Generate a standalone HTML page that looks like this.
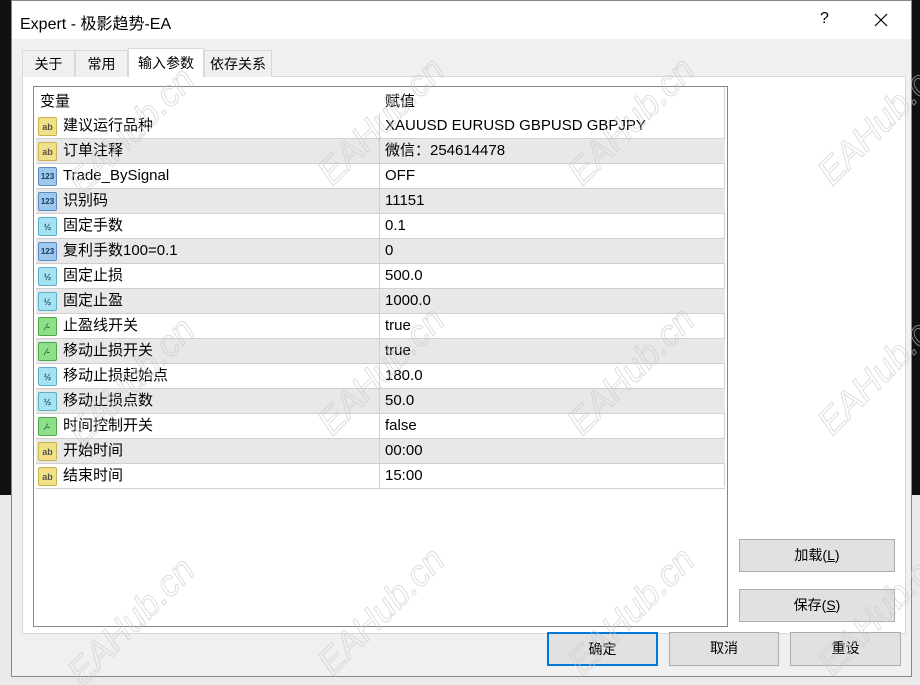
<!DOCTYPE html>
<html><head><meta charset="utf-8"><style>
*{margin:0;padding:0;box-sizing:border-box}
html,body{width:920px;height:685px;overflow:hidden}
body{background:#101010;position:relative;font-family:"Liberation Sans","Noto Sans CJK SC",sans-serif;font-size:15px;color:#000}
.abs{position:absolute}
#dlg{left:11px;top:0;width:901px;height:677px;background:#f0f0f0;border:1px solid #888}
#title{left:0;top:0;width:899px;height:38px;background:#fff}
.tab{top:49px;height:27px;border:1px solid #d9d9d9;border-bottom:none;background:#f0f0f0;font-size:14px;line-height:26px;text-align:center}
#panel{left:10px;top:75px;width:884px;height:558px;border:1px solid #d9d9d9;background:#fff}
#list{left:21px;top:85px;width:695px;height:541px;border:1px solid #828790;background:#fff}
.row{position:absolute;left:2px;width:689px;height:25px;border-bottom:1px solid #d0d0d0}
.row.g{background:#e8e8e8}
.row span{position:absolute;top:0;line-height:24px;height:24px}
.row .n{left:27px}
.row .v{left:349px}
.row .d{position:absolute;left:343px;top:0;width:1px;height:24px;background:#d0d0d0}
.ic{position:absolute;left:2px;top:3px;width:19px;height:19px;border-radius:2px;font-size:9px;font-weight:bold;font-style:normal;text-align:center;line-height:18px}
.ab{background:#efe08a;border:1px solid #c8b44a;color:#554}
.n3{background:#9ec8ee;border:1px solid #5a8cc0;color:#1a3a6a;font-size:8px}
.hf{background:#a6e2f0;border:1px solid #5ab0cc;color:#1a5a7a}
.gr{background:#8ede8a;border:1px solid #4aa848;color:#164}
.btn{background:#e1e1e1;border:1px solid #adadad;text-align:center;font-size:14px;line-height:31px}
.wm{position:absolute;font-size:36px;font-style:italic;color:transparent;-webkit-text-stroke:1px rgba(200,200,200,.6);transform:rotate(-45deg);white-space:nowrap;font-family:"Liberation Sans",sans-serif}
</style></head><body>
<div class="abs" style="left:0;top:495px;width:920px;height:190px;background:#eaeaea"></div>
<div id="dlg" class="abs">
 <div id="title" class="abs">
  <div class="abs" style="left:8px;top:9px;font-size:16px">Expert - 极影趋势-EA</div>
  <div class="abs" style="left:808px;top:9px;font-size:16px">?</div>
  <svg class="abs" style="left:862px;top:12px" width="14" height="14"><path d="M1 1L13 13M13 1L1 13" stroke="#000" stroke-width="1.2"/></svg>
 </div>
 <div id="panel" class="abs"></div>
 <div class="tab abs" style="left:10px;width:53px">关于</div>
 <div class="tab abs" style="left:63px;width:53px">常用</div>
 <div class="tab abs" style="left:116px;width:76px;top:47px;height:29px;background:#fff;line-height:28px">输入参数</div>
 <div class="tab abs" style="left:192px;width:68px">依存关系</div>
 <div id="list" class="abs">
  <div class="abs" style="left:6px;top:3px;line-height:24px">变量</div>
  <div class="abs" style="left:351px;top:3px;line-height:24px">赋值</div>
  <div class="abs" style="left:690px;top:0;width:1px;height:400px;background:#d0d0d0"></div>
  <div class="row" style="top:27px"><i class="ic ab">ab</i><span class="n">建议运行品种</span><b class="d"></b><span class="v">XAUUSD EURUSD GBPUSD GBPJPY</span></div>
  <div class="row g" style="top:52px"><i class="ic ab">ab</i><span class="n">订单注释</span><b class="d"></b><span class="v">微信：254614478</span></div>
  <div class="row" style="top:77px"><i class="ic n3">123</i><span class="n">Trade_BySignal</span><b class="d"></b><span class="v">OFF</span></div>
  <div class="row g" style="top:102px"><i class="ic n3">123</i><span class="n">识别码</span><b class="d"></b><span class="v">11151</span></div>
  <div class="row" style="top:127px"><i class="ic hf">½</i><span class="n">固定手数</span><b class="d"></b><span class="v">0.1</span></div>
  <div class="row g" style="top:152px"><i class="ic n3">123</i><span class="n">复利手数100=0.1</span><b class="d"></b><span class="v">0</span></div>
  <div class="row" style="top:177px"><i class="ic hf">½</i><span class="n">固定止损</span><b class="d"></b><span class="v">500.0</span></div>
  <div class="row g" style="top:202px"><i class="ic hf">½</i><span class="n">固定止盈</span><b class="d"></b><span class="v">1000.0</span></div>
  <div class="row" style="top:227px"><i class="ic gr">⁄‐</i><span class="n">止盈线开关</span><b class="d"></b><span class="v">true</span></div>
  <div class="row g" style="top:252px"><i class="ic gr">⁄‐</i><span class="n">移动止损开关</span><b class="d"></b><span class="v">true</span></div>
  <div class="row" style="top:277px"><i class="ic hf">½</i><span class="n">移动止损起始点</span><b class="d"></b><span class="v">180.0</span></div>
  <div class="row g" style="top:302px"><i class="ic hf">½</i><span class="n">移动止损点数</span><b class="d"></b><span class="v">50.0</span></div>
  <div class="row" style="top:327px"><i class="ic gr">⁄‐</i><span class="n">时间控制开关</span><b class="d"></b><span class="v">false</span></div>
  <div class="row g" style="top:352px"><i class="ic ab">ab</i><span class="n">开始时间</span><b class="d"></b><span class="v">00:00</span></div>
  <div class="row" style="top:377px"><i class="ic ab">ab</i><span class="n">结束时间</span><b class="d"></b><span class="v">15:00</span></div>
 </div>
 <div class="btn abs" style="left:727px;top:538px;width:156px;height:33px">加载(<u>L</u>)</div>
 <div class="btn abs" style="left:727px;top:588px;width:156px;height:33px">保存(<u>S</u>)</div>
 <div class="btn abs" style="left:535px;top:631px;width:111px;height:34px;border:2px solid #0078d7;line-height:30px">确定</div>
 <div class="btn abs" style="left:657px;top:631px;width:110px;height:34px">取消</div>
 <div class="btn abs" style="left:778px;top:631px;width:111px;height:34px">重设</div>
</div>
<div class="wm" style="left:50px;top:110px">EAHub.cn</div>
<div class="wm" style="left:300px;top:100px">EAHub.cn</div>
<div class="wm" style="left:550px;top:100px">EAHub.cn</div>
<div class="wm" style="left:800px;top:100px">EAHub.cn</div>
<div class="wm" style="left:50px;top:360px">EAHub.cn</div>
<div class="wm" style="left:300px;top:350px">EAHub.cn</div>
<div class="wm" style="left:550px;top:350px">EAHub.cn</div>
<div class="wm" style="left:800px;top:350px">EAHub.cn</div>
<div class="wm" style="left:50px;top:600px">EAHub.cn</div>
<div class="wm" style="left:300px;top:590px">EAHub.cn</div>
<div class="wm" style="left:550px;top:590px">EAHub.cn</div>
<div class="wm" style="left:800px;top:590px">EAHub.cn</div>
</body></html>
